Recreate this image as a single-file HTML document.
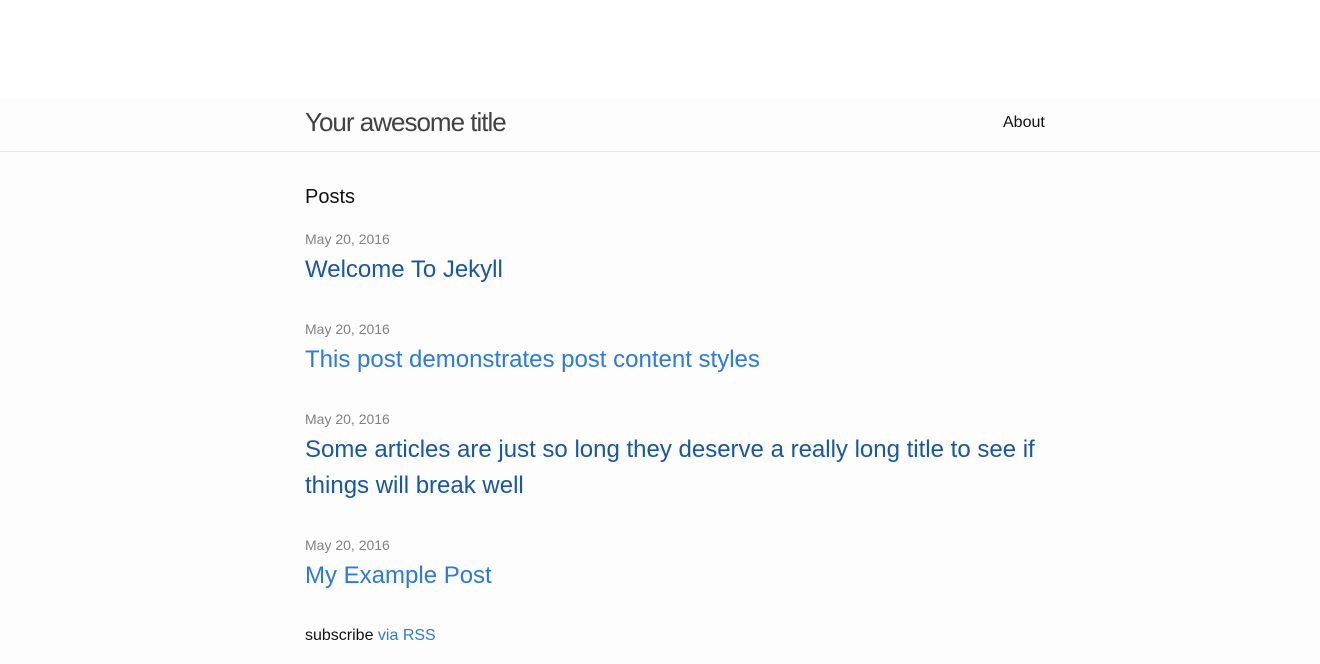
<!DOCTYPE html>
<html><head><style>
body{margin:0;background:#fff;font-family:"Liberation Sans",Arial,sans-serif;color:#111;}
.bg{position:absolute;top:98px;left:0;right:0;bottom:0;background:#fdfdfd;}
.hdr{position:absolute;top:98px;left:0;right:0;height:53px;border-bottom:1px solid #e8e8e8;}
.t{position:absolute;left:305px;top:107px;font-size:26px;letter-spacing:-1px;color:#424242;line-height:30px;}
.about{position:absolute;left:1003px;top:114px;font-size:16px;color:#111;}
.c{position:absolute;left:305px;width:740px;}
.d{font-size:14px;color:#828282;}
.l{font-size:24px;line-height:36px;}
.v{color:#1756a9}.u{color:#2a7ae2}
</style></head><body>
<div class="bg"></div><div class="hdr"></div>
<div class="t">Your awesome title</div>
<div class="about">About</div>
<div class="c" style="top:186px;font-size:20px;color:#111">Posts</div>
<div class="c d" style="top:231px">May 20, 2016</div>
<div class="c l v" style="top:252px">Welcome To Jekyll</div>
<div class="c d" style="top:321px">May 20, 2016</div>
<div class="c l u" style="top:342px">This post demonstrates post content styles</div>
<div class="c d" style="top:411px">May 20, 2016</div>
<div class="c l v" style="top:432px">Some articles are just so long they deserve a really long title to see if things will break well</div>
<div class="c d" style="top:537px">May 20, 2016</div>
<div class="c l u" style="top:558px">My Example Post</div>
<div class="c" style="top:627px;font-size:16px">subscribe <span class="u">via RSS</span></div>
</body></html>
